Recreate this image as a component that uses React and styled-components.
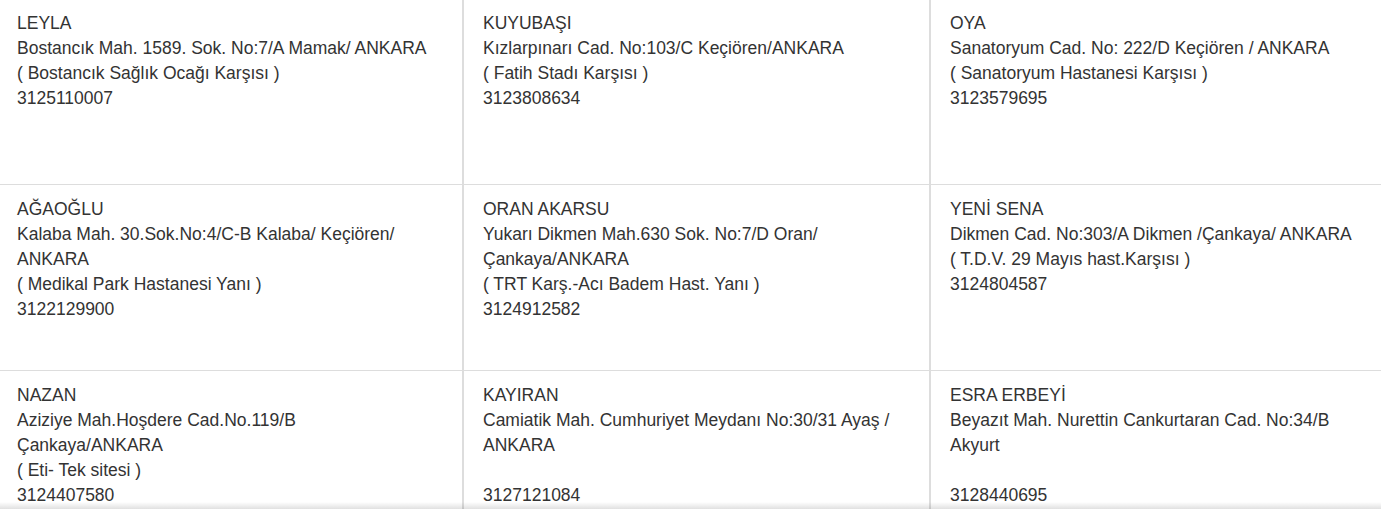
import React from 'react';
import styled, { createGlobalStyle } from 'styled-components';

const pharmacies = [
  {
    name: 'LEYLA',
    lines: ['Bostancık Mah. 1589. Sok. No:7/A Mamak/ ANKARA', '( Bostancık Sağlık Ocağı Karşısı )'],
    phone: '3125110007',
  },
  {
    name: 'KUYUBAŞI',
    lines: ['Kızlarpınarı Cad. No:103/C Keçiören/ANKARA', '( Fatih Stadı Karşısı )'],
    phone: '3123808634',
  },
  {
    name: 'OYA',
    lines: ['Sanatoryum Cad. No: 222/D Keçiören / ANKARA', '( Sanatoryum Hastanesi Karşısı )'],
    phone: '3123579695',
  },
  {
    name: 'AĞAOĞLU',
    lines: ['Kalaba Mah. 30.Sok.No:4/C-B Kalaba/ Keçiören/', 'ANKARA', '( Medikal Park Hastanesi Yanı )'],
    phone: '3122129900',
  },
  {
    name: 'ORAN AKARSU',
    lines: ['Yukarı Dikmen Mah.630 Sok. No:7/D Oran/', 'Çankaya/ANKARA', '( TRT Karş.-Acı Badem Hast. Yanı )'],
    phone: '3124912582',
  },
  {
    name: 'YENİ SENA',
    lines: ['Dikmen Cad. No:303/A Dikmen /Çankaya/ ANKARA', '( T.D.V. 29 Mayıs hast.Karşısı )'],
    phone: '3124804587',
  },
  {
    name: 'NAZAN',
    lines: ['Aziziye Mah.Hoşdere Cad.No.119/B', 'Çankaya/ANKARA', '( Eti- Tek sitesi )'],
    phone: '3124407580',
  },
  {
    name: 'KAYIRAN',
    lines: ['Camiatik Mah. Cumhuriyet Meydanı No:30/31 Ayaş /', 'ANKARA', ''],
    phone: '3127121084',
  },
  {
    name: 'ESRA ERBEYİ',
    lines: ['Beyazıt Mah. Nurettin Cankurtaran Cad. No:34/B', 'Akyurt', ''],
    phone: '3128440695',
  },
];

const GlobalStyle = createGlobalStyle`
  html, body {
    margin: 0;
    padding: 0;
    background: #fff;
    overflow: hidden;
  }
  body {
    font-family: "Liberation Sans", Arial, sans-serif;
    color: #333;
  }
`;

const Page = styled.div`
  width: 1381px;
  height: 509px;
  overflow: hidden;
  position: relative;
`;

const Grid = styled.div`
  display: grid;
  grid-template-columns: 466px 467px 467px;
  margin: -2px 0 0 -3px;
`;

const Cell = styled.div`
  box-sizing: border-box;
  height: 186px;
  border-top: 1px solid #ddd;
  border-left: 1px solid #ddd;
  border-right: 1px solid #ddd;
  padding: 12px 19px 0;
  font-size: 17.5px;
  line-height: 25px;
`;

const Line = styled.div`
  min-height: 25px;
  white-space: nowrap;
`;

const BottomShade = styled.div`
  position: absolute;
  left: 0;
  right: 0;
  bottom: 0;
  height: 7px;
  background: linear-gradient(to bottom, rgba(0, 0, 0, 0), rgba(0, 0, 0, 0.12));
`;

const App = () => (
  <Page>
    <GlobalStyle />
    <Grid>
      {pharmacies.map((p) => (
        <Cell key={p.name}>
          <Line>{p.name}</Line>
          {p.lines.map((l, i) => (
            <Line key={i}>{l}</Line>
          ))}
          <Line>{p.phone}</Line>
        </Cell>
      ))}
    </Grid>
    <BottomShade />
  </Page>
);

export default App;
